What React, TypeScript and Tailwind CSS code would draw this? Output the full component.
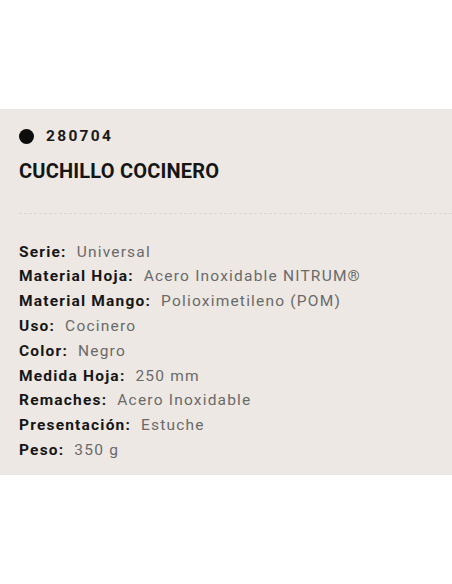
import React from "react";

const rows: [string, string][] = [
  ["Serie", "Universal"],
  ["Material Hoja", "Acero Inoxidable NITRUM®"],
  ["Material Mango", "Polioximetileno (POM)"],
  ["Uso", "Cocinero"],
  ["Color", "Negro"],
  ["Medida Hoja", "250 mm"],
  ["Remaches", "Acero Inoxidable"],
  ["Presentación", "Estuche"],
  ["Peso", "350 g"],
];

export default function App() {
  return (
    <div className="w-[452px] h-[584px] bg-white" style={{ fontFamily: "Roboto, 'Liberation Sans', sans-serif" }}>
      <div className="h-[109px]" />
      <div className="h-[366px] bg-[#ede8e3] pl-[19px] flex flex-col">
        <div className="flex items-center gap-[12px] mt-[20px] h-[15px]">
          <span className="w-[15px] h-[15px] rounded-full bg-[#0d0d0d]" />
          <span className="text-[15.5px] font-bold tracking-[2.3px] text-[#1a1a1a] leading-none">280704</span>
        </div>
        <div className="mt-[17px] text-[20px] font-bold text-[#151515] leading-none tracking-[0.2px]">CUCHILLO COCINERO</div>
        <div className="mt-[32px] border-t border-dashed border-[#dcd6d0]" />
        <div className="mt-[26px] flex flex-col">
          {rows.map(([k, v]) => (
            <div key={k} className="h-[24.8px] flex items-center text-[15.5px] tracking-[1.2px] leading-none">
              <span className="font-bold text-[#161616]">{k}:</span>
              <span className="ml-[10px] text-[#6a6a6a]">{v}</span>
            </div>
          ))}
        </div>
      </div>
    </div>
  );
}
